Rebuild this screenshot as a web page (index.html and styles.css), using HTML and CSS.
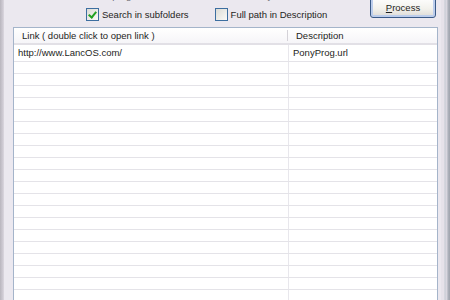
FILE: index.html
```html
<!DOCTYPE html>
<html lang="en">
<head>
    <meta charset="UTF-8">
    <title>Link Extractor</title>
    <link rel="stylesheet" href="styles.css">
</head>
<body>

<div class="window">
    <div class="edge-left"></div>

    <div class="client">
        <div class="top">
            <div class="opts">
                <div class="hint">Scan program links in the selected directory</div>
                <div class="checks">
                    <label class="check"><span class="box checked"></span>Search in subfolders</label>
                    <label class="check"><span class="box"></span>Full path in Description</label>
                </div>
            </div>
            <button class="btn"><u>P</u>rocess</button>
        </div>

        <div class="list">
            <div class="head">
                <div class="col col-link">Link ( double click to open link )</div>
                <div class="col col-desc">Description</div>
            </div>
            <div id="rows"></div>
        </div>
    </div>

    <div class="edge-right"></div>
</div>

<script>
    const rows = document.getElementById('rows');
    const data = [['http://www.LancOS.com/', 'PonyProg.url']];

    for (let i = 0; i < 22; i++) {
        const row = document.createElement('div');
        row.className = i === 0 ? 'row first' : 'row';
        const item = data[i] || ['', ''];
        row.innerHTML = '<div class="cell cell-link">' + item[0] + '</div>' +
                        '<div class="cell cell-desc">' + item[1] + '</div>';
        rows.appendChild(row);
    }
</script>

</body>
</html>
```

FILE: styles.css
```css
body {
    margin: 0;
    font-family: 'Liberation Sans', Arial, sans-serif;
    font-size: 9.5px;
    color: #1e1e22;
    background: #ebe8ef;
    overflow: hidden;
}

.window {
    display: flex;
    height: 300px;
}

.edge-left {
    width: 4px;
    background: linear-gradient(to right, #b9b6be, #cfcbd4 70%, #dcd8e0);
}

.edge-right {
    width: 9px;
    background: linear-gradient(to right, #e6e2ea 0, #e6e2ea 30%, #c9cdd6 45%, #dcd9e2 60%, #aeb2bc 80%, #9ea2ac 100%);
}

.client {
    flex: 1;
    padding-left: 9px;
    padding-right: 3px;
    overflow: hidden;
}

/* options + button */
.top {
    display: flex;
    height: 27px;
}

.opts {
    flex: 1;
    padding-left: 73px;
}

.hint {
    margin-top: -10px;
    height: 12px;
    line-height: 12px;
    color: #6a6870;
    padding-left: 2px;
    white-space: nowrap;
}

.checks {
    display: flex;
    margin-top: 5px;
}

.check {
    display: flex;
    align-items: center;
    height: 15px;
    margin-right: 26px;
    white-space: nowrap;
}

.box {
    width: 11px;
    height: 11px;
    border: 1px solid #3c6ea0;
    background: linear-gradient(135deg, #dcdcd6, #fafaf8);
    margin-right: 3px;
    position: relative;
}

.box.checked::after {
    content: "";
    position: absolute;
    left: 3px;
    top: 1px;
    width: 3px;
    height: 6px;
    border: solid #21a121;
    border-width: 0 2px 2px 0;
    transform: rotate(40deg);
}

.btn {
    align-self: flex-start;
    margin-top: -4px;
    width: 66px;
    height: 22px;
    font-family: inherit;
    font-size: 9.5px;
    color: #1e1e22;
    border: 1px solid #3a5a88;
    border-radius: 3px;
    background: linear-gradient(#ffffff, #f2f1ec 60%, #dcdad6);
    box-shadow: inset 0 0 0 2px #bccdec;
    padding: 0;
    margin-right: 2px;
}

/* list view */
.list {
    background: #fff;
    border: 1px solid #a4b4ca;
    height: 300px;
}

.head {
    display: flex;
    height: 15px;
    border-bottom: 2px solid #e2e0e6;
    background: linear-gradient(#ffffff, #f6f5f8);
}

.col {
    line-height: 15px;
    padding-left: 8px;
    white-space: nowrap;
}

.col-link {
    width: 266px;
    position: relative;
}

.col-link::after {
    content: "";
    position: absolute;
    right: 0;
    top: 2px;
    bottom: 2px;
    width: 1px;
    background: #d4d2d8;
}

.row {
    display: flex;
    height: 11px;
    border-bottom: 1px solid #e4e3e8;
}

.row.first {
    height: 16px;
}

.cell {
    padding-left: 4px;
    line-height: 16px;
    white-space: nowrap;
}

.cell-link {
    width: 270px;
    border-right: 1px solid #e8e7ec;
}
```
